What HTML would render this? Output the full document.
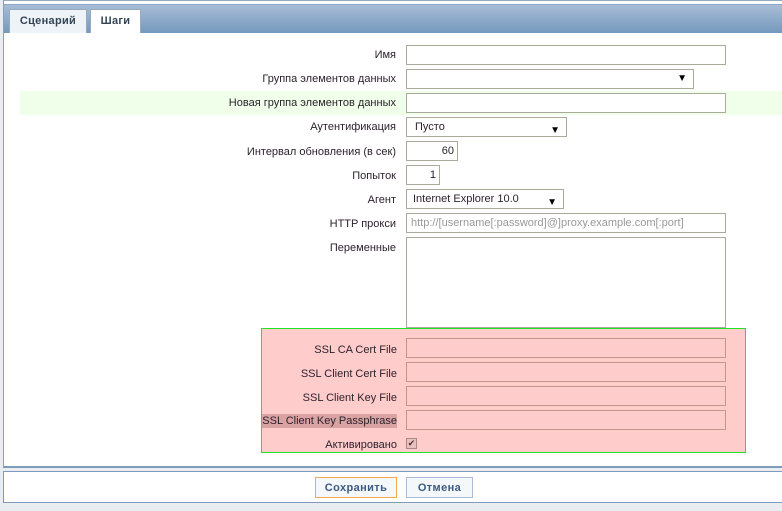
<!DOCTYPE html>
<html><head><meta charset="utf-8"><style>
*{box-sizing:border-box;margin:0;padding:0}
body{width:782px;height:511px;background:#e9edf1;font-family:"Liberation Sans","DejaVu Sans",sans-serif;font-size:11px;color:#2a1f2a;position:relative;overflow:hidden}
.a{position:absolute}
.top{left:3px;top:0;width:779px;height:468px;background:#fff;border-left:1px solid #8aa0b8;border-top:1px solid #9aaabb;border-bottom:2px solid #7f9bbb}
.hdr{left:4px;top:4px;width:778px;height:29px;background:linear-gradient(#a8bdd5,#7499be);border-top:1px solid #8aa6c8}
.tab{top:9px;height:24px;border:1px solid #9ab;border-bottom:none;background:#fff;font-weight:bold;color:#345;font-size:11px;line-height:22px;text-align:center;letter-spacing:0.3px}
.lbl{width:390px;left:6px;text-align:right;height:14px;line-height:14px;white-space:nowrap}
.in{border:1px solid #aaa99a;background:#fff;height:20px}
.sel::after{content:"▼";position:absolute;right:6px;top:3px;font-size:10px;color:#000}
.t{padding-left:8px;line-height:19px}
.ssl .in{border-color:#c0958a;background:#fcc}
.btn{top:477px;height:21px;border:1px solid #a9bcd6;background:#f5f8fb;font-weight:bold;color:#3c5a82;font-size:11px;line-height:20px;text-align:center;letter-spacing:0.4px}
</style></head><body>
<div class="a top"></div>
<div class="a hdr"></div>
<div class="a tab" style="left:9px;width:78px;background:#eef3f8">Сценарий</div>
<div class="a tab" style="left:90px;width:51px">Шаги</div>
<div class="a" style="left:20px;top:91px;width:762px;height:24px;background:#efffea"></div>

<div class="a lbl" style="top:48px">Имя</div><div class="a in" style="left:406px;top:45px;width:320px"></div>
<div class="a lbl" style="top:72px">Группа элементов данных</div><div class="a in sel" style="left:406px;top:69px;width:288px"></div>
<div class="a lbl" style="top:96px">Новая группа элементов данных</div><div class="a in" style="left:406px;top:93px;width:320px"></div>
<div class="a lbl" style="top:120px">Аутентификация</div><div class="a in sel t" style="left:406px;top:117px;width:161px">Пусто</div>
<div class="a lbl" style="top:145px">Интервал обновления (в сек)</div><div class="a in" style="left:406px;top:141px;width:52px;text-align:right;padding-right:3px;line-height:19px">60</div>
<div class="a lbl" style="top:169px">Попыток</div><div class="a in" style="left:406px;top:165px;width:34px;text-align:right;padding-right:3px;line-height:19px">1</div>
<div class="a lbl" style="top:193px">Агент</div><div class="a in sel t" style="left:406px;top:189px;width:158px;padding-left:6px">Internet Explorer 10.0</div>
<div class="a lbl" style="top:217px">HTTP прокси</div><div class="a in" style="left:406px;top:213px;width:320px;color:#999;padding-left:4px;line-height:19px">http://[username[:password]@]proxy.example.com[:port]</div>
<div class="a lbl" style="top:241px">Переменные</div><div class="a in" style="left:406px;top:237px;width:320px;height:91px"></div>

<div class="a ssl" style="left:261px;top:328px;width:485px;height:125px;background:#fcc;border:1px solid #22e622">
<div class="a lbl" style="left:0;width:135px;top:14px">SSL CA Cert File</div><div class="a in" style="left:144px;top:9px;width:320px"></div>
<div class="a lbl" style="left:0;width:135px;top:38px">SSL Client Cert File</div><div class="a in" style="left:144px;top:33px;width:320px"></div>
<div class="a lbl" style="left:0;width:135px;top:62px">SSL Client Key File</div><div class="a in" style="left:144px;top:57px;width:320px"></div>
<div class="a" style="left:0;width:135px;top:85px;height:14px;line-height:14px;background:#d9a3a3;text-align:right;white-space:nowrap;overflow:hidden">SSL Client Key Passphrase</div><div class="a in" style="left:144px;top:81px;width:320px"></div>
<div class="a lbl" style="left:0;width:135px;top:109px">Активировано</div>
<div class="a" style="left:144px;top:109px;width:11px;height:11px;border:1px solid #a88;background:#e8c0c0;font-size:9px;line-height:9px;text-align:center;color:#533">✔</div>
</div>

<div class="a" style="left:3px;top:471px;width:779px;height:32px;background:#fff;border:1px solid #7f9bbb;border-right:none"></div>
<div class="a btn" style="left:315px;width:82px;border-color:#f4a94a">Сохранить</div>
<div class="a btn" style="left:406px;width:67px">Отмена</div>
</body></html>
